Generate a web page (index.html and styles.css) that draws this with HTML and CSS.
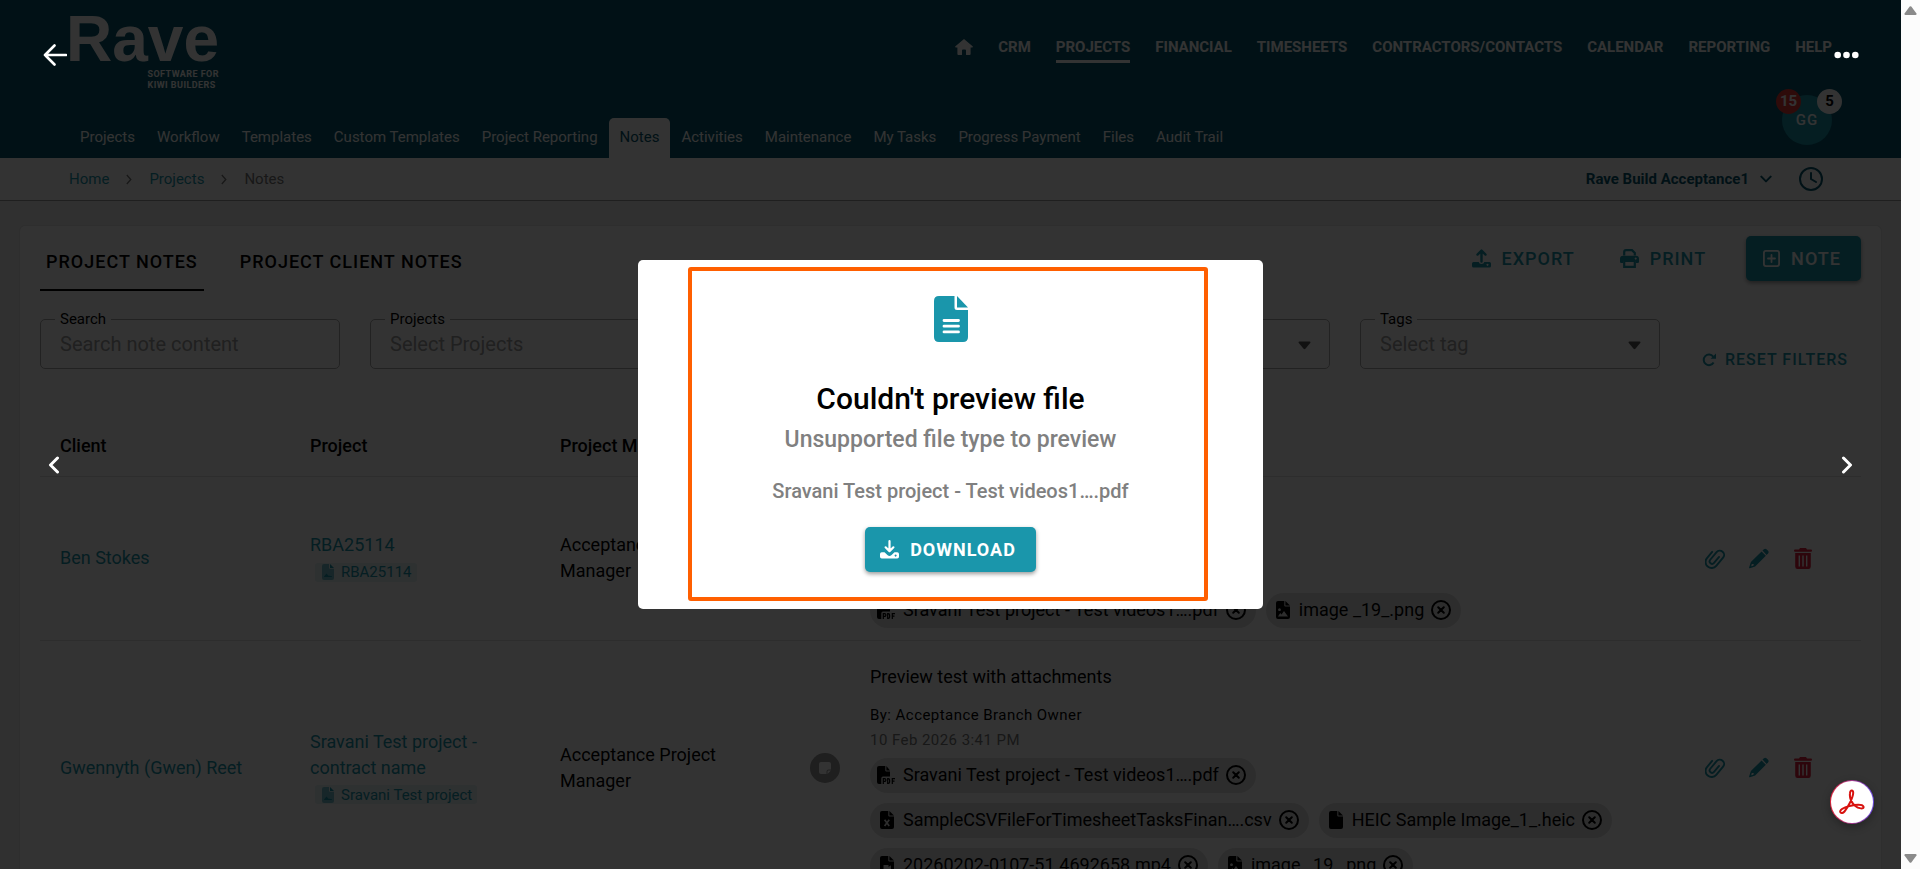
FILE: index.html
```html
<!DOCTYPE html>
<html lang="en">
<head>
<meta charset="utf-8">
<title>Rave - Project Notes</title>
<link rel="stylesheet" href="styles.css">
</head>
<body>
<svg class="sprite" aria-hidden="true">
  <defs>
    <symbol id="i-home" viewBox="0 0 18 16"><path d="M9 0 .4 7.3Q-.2 8 .6 8.400H2.400V15q0 1 1 1H6.400q.6 0 .6-.6V11.500q0-1 1-1h2q1 0 1 1v3.900q0 .6.6.6h3q1 0 1-1V8.400h1.800q.8-.4.2-1.100z"/></symbol>
    <symbol id="i-upload" viewBox="0 0 19 19"><g fill="none" stroke="currentColor" stroke-width="2.400" stroke-linecap="round" stroke-linejoin="round"><path d="M9.500 12.500V2M5.500 5.600l4-4 4 4"/></g><path d="M1.500 13h5.200q.4 2 2.800 2t2.800-2h5.200q1.500 0 1.500 1.500v2.500q0 1.500-1.500 1.500h-16Q0 18.500 0 17v-2.500Q0 13 1.500 13zm14 1.800a1 1 0 1 0 .01 0z" fill-rule="evenodd"/></symbol>
    <symbol id="i-download" viewBox="0 0 19 19"><g fill="none" stroke="currentColor" stroke-width="2.200" stroke-linecap="round" stroke-linejoin="round"><path d="M9.500 1.200v9.500M5.600 7.300l3.900 3.900 3.900-3.900"/></g><path d="M1.800 12.200h2.700l3.200 3q1.800 1.400 3.600 0l3.200-3h2.700Q19 12.200 19 14v2.800q0 1.800-1.800 1.800H1.800Q0 18.600 0 16.800V14q0-1.800 1.800-1.800zm13.800 2.300a1 1 0 1 0 .01 0z" fill-rule="evenodd"/></symbol>
    <symbol id="i-print" viewBox="0 0 19 19"><path d="M4.200 6.500V3Q4.200 1.200 6 1.200h6L14.800 4v2.500" fill="none" stroke="currentColor" stroke-width="2.200"/><path d="M3 6.800h13Q19 6.800 19 9.800v3q0 1.200-1.200 1.200H16v-2.500H3V14H1.200Q0 14 0 12.800v-3q0-3 3-3zm12.700 1.700a1 1 0 1 0 .01 0z" fill-rule="evenodd"/><path d="M4.200 12v5.800h10.600V12z" fill="none" stroke="currentColor" stroke-width="2.200"/></symbol>
    <symbol id="i-addnote" viewBox="0 0 17 17"><g fill="none" stroke="currentColor" stroke-width="1.800" stroke-linecap="round"><rect x=".9" y=".9" width="15.200" height="15.200" rx="2"/><path d="M8.500 5v7M5 8.500h7"/></g></symbol>
    <symbol id="i-reset" viewBox="0 0 14 14"><path d="M11.600 9.500A5.300 5.300 0 1 1 11.200 3.600" fill="none" stroke="currentColor" stroke-width="2"/><path d="M14 .5v5.300H8.600z"/></symbol>
    <symbol id="i-clock" viewBox="0 0 24 24"><g fill="none" stroke="currentColor" stroke-width="2" stroke-linecap="round"><circle cx="12" cy="12" r="11"/><path d="M12 6v6l5 3"/></g></symbol>
    <symbol id="i-clip" viewBox="0 0 20 21"><path transform="translate(9.500 10.500) rotate(40) scale(1.120) translate(-5 -11.200)" d="M7.200 7.500v7a2.200 2.200 0 0 1-4.400 0V5.700a3.800 3.800 0 0 1 7.600 0v9.500a5.400 5.400 0 0 1-10.800 0V8" fill="none" stroke="currentColor" stroke-width="1.700" stroke-linecap="round"/></symbol>
    <symbol id="i-pencil" viewBox="0 0 21 21"><path d="m14.200 2.200 1.400-1.400q1.400-1.200 2.800 0l1.600 1.600q1.300 1.400 0 2.800l-1.500 1.500z"/><path d="m13.200 3.200 4.500 4.500L7 18.400q-.5.5-1.200.7L.9 20.800q-1 .2-.8-.8l1.600-5q.3-.8.800-1.300zM2.900 16.300 2.300 18.600l2.300-.6.400-1.600H3z" fill-rule="evenodd"/></symbol>
    <symbol id="i-trash" viewBox="0 0 18 21"><path d="M6 0h6l1 1.400h4q1 0 1 1.200t-1 1.200H1Q0 3.800 0 2.600t1-1.200h4zM1.200 5h15.600v13.500Q16.800 21 14.500 21h-11Q1.200 21 1.200 18.500zM4.600 7.500v11H6v-11zm3.700 0v11h1.400v-11zm3.700 0v11h1.400v-11z" fill-rule="evenodd"/></symbol>
    <symbol id="i-caret" viewBox="0 0 13 9"><path d="M1.500.5h10q1.600.3.700 1.500L7.400 7.700q-.9.900-1.800 0L.8 2Q-.1.800 1.500.5z"/></symbol>
    <symbol id="i-chev" viewBox="0 0 12 18"><path d="M9.500 2 2.500 9l7 7" fill="none" stroke="currentColor" stroke-width="3" stroke-linecap="round" stroke-linejoin="round"/></symbol>
    <symbol id="i-sep" viewBox="0 0 6 11"><path d="m.8 1 4 4.500-4 4.500" fill="none" stroke="currentColor" stroke-width="1.300"/></symbol>
    <symbol id="i-x" viewBox="0 0 20 20"><g fill="none" stroke="currentColor" stroke-width="2" stroke-linecap="round"><circle cx="10" cy="10" r="9"/><path d="m7.200 7.200 5.600 5.600M12.800 7.200l-5.600 5.600"/></g></symbol>
    <symbol id="i-file" viewBox="0 0 14 18"><path d="M2 0h6.300v4.500q0 1 1 1H14V16q0 2-2 2H2q-2 0-2-2V2q0-2 2-2z"/><path d="M9.400 0 14 4.500H9.400z"/></symbol>
    <symbol id="i-image" viewBox="0 0 14 18"><path d="M2 0h6.300v4.500q0 1 1 1H14V16q0 2-2 2H2q-2 0-2-2V2q0-2 2-2zM3.500 7.300a1.400 1.400 0 1 0 .01 0zM2 15.500h10L8 10l-2.500 3.500L4.200 12z" fill-rule="evenodd"/><path d="M9.400 0 14 4.500H9.400z"/></symbol>
    <symbol id="i-excel" viewBox="0 0 14 18"><path d="M2 0h6.300v4.500q0 1 1 1H14V16q0 2-2 2H2q-2 0-2-2V2q0-2 2-2z"/><path d="M9.400 0 14 4.500H9.400z"/><path d="m4.600 8.700 4.600 6.300M9.200 8.700 4.600 15" stroke="#e1e1e1" stroke-width="1.700"/></symbol>
    <symbol id="i-video" viewBox="0 0 14 18"><path d="M2 0h6.300v4.500q0 1 1 1H14V16q0 2-2 2H2q-2 0-2-2V2q0-2 2-2zM3.500 9v6h5v-1.800l2.500 1.600V9.300L8.500 11V9z" fill-rule="evenodd"/><path d="M9.400 0 14 4.500H9.400z"/></symbol>
    <symbol id="i-pdf" viewBox="0 0 18 18"><path d="M2 0h6.300v4.500q0 1 1 1H13V10.500H6q-1.700 0-1.700 2V18H2q-2 0-2-2V2q0-2 2-2z"/><path d="M9.400 0 13 4.500H9.400z"/><path d="M6.300 18v-5.400h1.200a1.400 1.400 0 0 1 0 2.800H6.300M10.700 12.600v4.800h.6q1.300 0 1.300-1.300v-2.200q0-1.300-1.300-1.300zM15.300 18v-5.400H18M15.300 15.200h2.200" fill="none" stroke="currentColor" stroke-width="1.200"/></symbol>
    <symbol id="i-contract" viewBox="0 0 12 16"><path d="M2 0h5v4q0 .8.8.8H12V14q0 2-2 2H2q-2 0-2-2V2q0-2 2-2z" opacity=".55"/><path d="M8 0l4 4H8zM2 12.500l2.500-3 2 2.300q2-.2 3.500.4v.8H2z"/></symbol>
  </defs>
</svg>
<div class="window">
  <div class="page">
    <header class="top">
      <div class="top-row">
        <a class="logo" href="#"><span class="logo-name">Rave</span><span class="logo-tag">SOFTWARE FOR<br>KIWI BUILDERS</span></a>
        <nav class="main-nav" aria-label="Main">
          <a href="#" aria-label="Dashboard"><svg class="home"><use href="#i-home"/></svg></a>
          <a href="#">CRM</a>
          <a href="#" class="on">PROJECTS</a>
          <a href="#">FINANCIAL</a>
          <a href="#">TIMESHEETS</a>
          <a href="#">CONTRACTORS/CONTACTS</a>
          <a href="#">CALENDAR</a>
          <a href="#">REPORTING</a>
          <a href="#">HELP</a>
        </nav>
      </div>
      <div class="bottom-row">
        <nav class="sub-nav" aria-label="Projects">
          <a href="#">Projects</a><a href="#">Workflow</a><a href="#">Templates</a><a href="#">Custom Templates</a><a href="#">Project Reporting</a><a href="#" class="on">Notes</a><a href="#">Activities</a><a href="#">Maintenance</a><a href="#">My Tasks</a><a href="#">Progress Payment</a><a href="#">Files</a><a href="#">Audit Trail</a>
        </nav>
        <button class="avatar" type="button">GG<span class="badge red">15</span><span class="badge grey">5</span></button>
      </div>
    </header>
    <div class="crumbs">
      <nav class="trail" aria-label="Breadcrumb">
        <a href="#">Home</a><svg class="sep"><use href="#i-sep"/></svg><a href="#">Projects</a><svg class="sep"><use href="#i-sep"/></svg><span>Notes</span>
      </nav>
      <div class="branch">
        <button class="branch-pick" type="button">Rave Build Acceptance1<svg class="down"><use href="#i-chev"/></svg></button>
        <button class="icon-btn" type="button" aria-label="Timer"><svg class="clock"><use href="#i-clock"/></svg></button>
      </div>
    </div>
    <main class="card">
      <div class="card-head">
        <div class="tabs" role="tablist">
          <button type="button" role="tab" aria-selected="true" class="on">PROJECT NOTES</button>
          <button type="button" role="tab" aria-selected="false">PROJECT CLIENT NOTES</button>
        </div>
        <div class="tools">
          <button type="button"><svg class="i19"><use href="#i-upload"/></svg>EXPORT</button>
          <button type="button"><svg class="i19"><use href="#i-print"/></svg>PRINT</button>
          <button type="button" class="solid"><svg class="i17"><use href="#i-addnote"/></svg>NOTE</button>
        </div>
      </div>
      <form class="filters">
        <div class="field"><label for="f1">Search</label><input id="f1" type="text" placeholder="Search note content"></div>
        <div class="field"><label for="f2">Projects</label><select id="f2"><option>Select Projects</option></select><svg class="caret"><use href="#i-caret"/></svg></div>
        <div class="field"><select aria-label="Filter"><option></option></select><svg class="caret"><use href="#i-caret"/></svg></div>
        <div class="field"><select aria-label="Filter"><option></option></select><svg class="caret"><use href="#i-caret"/></svg></div>
        <div class="field"><label for="f5">Tags</label><select id="f5"><option>Select tag</option></select><svg class="caret"><use href="#i-caret"/></svg></div>
        <button class="reset" type="reset"><svg class="i14"><use href="#i-reset"/></svg>RESET FILTERS</button>
      </form>
      <table class="notes">
        <colgroup><col class="c-main"><col class="c-main"><col class="c-main"><col class="c-type"><col><col class="c-act"></colgroup>
        <thead><tr><th>Client</th><th>Project</th><th>Project Manager</th><th></th><th></th><th></th></tr></thead>
        <tbody>
          <tr class="short">
            <td><a href="#">Ben Stokes</a></td>
            <td><a href="#">RBA25114</a><br><a href="#" class="ref"><svg class="i16"><use href="#i-contract"/></svg>RBA25114</a></td>
            <td>Acceptance Project Manager</td>
            <td class="type"></td>
            <td class="note low">
              <div class="chips">
                <span class="chip"><svg class="w18"><use href="#i-pdf"/></svg>Sravani Test project - Test videos1….pdf<button type="button" aria-label="Remove"><svg><use href="#i-x"/></svg></button></span>
                <span class="chip"><svg><use href="#i-image"/></svg>image _19_.png<button type="button" aria-label="Remove"><svg><use href="#i-x"/></svg></button></span>
              </div>
            </td>
            <td><div class="acts"><button type="button" aria-label="Attach"><svg><use href="#i-clip"/></svg></button><button type="button" aria-label="Edit"><svg><use href="#i-pencil"/></svg></button><button type="button" aria-label="Delete" class="del"><svg><use href="#i-trash"/></svg></button></div></td>
          </tr>
          <tr>
            <td><a href="#">Gwennyth (Gwen) Reet</a></td>
            <td><a href="#">Sravani Test project - contract name</a><br><a href="#" class="ref"><svg class="i16"><use href="#i-contract"/></svg>Sravani Test project</a></td>
            <td>Acceptance Project Manager</td>
            <td class="type"><span class="dot"><svg viewBox="0 0 12 12"><path d="M2 0h8q2 0 2 2v5.500H9.500q-2 0-2 2V12H2q-2 0-2-2V2Q0 0 2 0zM8.500 12V9.500q0-1 1-1H12z"/></svg></span></td>
            <td class="note">
              <p class="title">Preview test with attachments</p>
              <p class="by">By: Acceptance Branch Owner</p>
              <p class="date">10 Feb 2026 3:41 PM</p>
              <div class="chips">
                <span class="chip"><svg class="w18"><use href="#i-pdf"/></svg>Sravani Test project - Test videos1….pdf<button type="button" aria-label="Remove"><svg><use href="#i-x"/></svg></button></span>
                <span class="chip"><svg><use href="#i-excel"/></svg>SampleCSVFileForTimesheetTasksFinan….csv<button type="button" aria-label="Remove"><svg><use href="#i-x"/></svg></button></span>
                <span class="chip"><svg><use href="#i-file"/></svg>HEIC Sample Image_1_.heic<button type="button" aria-label="Remove"><svg><use href="#i-x"/></svg></button></span>
                <span class="chip"><svg><use href="#i-video"/></svg>20260202-0107-51.4692658.mp4<button type="button" aria-label="Remove"><svg><use href="#i-x"/></svg></button></span>
                <span class="chip"><svg><use href="#i-image"/></svg>image _19_.png<button type="button" aria-label="Remove"><svg><use href="#i-x"/></svg></button></span>
              </div>
            </td>
            <td><div class="acts"><button type="button" aria-label="Attach"><svg><use href="#i-clip"/></svg></button><button type="button" aria-label="Edit"><svg><use href="#i-pencil"/></svg></button><button type="button" aria-label="Delete" class="del"><svg><use href="#i-trash"/></svg></button></div></td>
          </tr>
        </tbody>
      </table>
    </main>
    <div class="overlay">
      <div class="bar">
        <button type="button" aria-label="Back"><svg class="back" viewBox="0 0 24 22"><path d="M23 11H2M11.500 1.500 2 11l9.500 9.500" fill="none" stroke="currentColor" stroke-width="2.600" stroke-linecap="round" stroke-linejoin="round"/></svg></button>
        <button type="button" aria-label="More"><svg class="more" viewBox="0 0 25 8"><circle cx="3.700" cy="4" r="3.300"/><circle cx="12.500" cy="4" r="3.300"/><circle cx="21.300" cy="4" r="3.300"/></svg></button>
      </div>
      <button class="prev" type="button" aria-label="Previous"><svg><use href="#i-chev"/></svg></button>
      <section class="dialog" role="dialog" aria-labelledby="dt">
        <svg class="doc" viewBox="0 0 34 46"><path d="M5 0h15.500v11.500q0 2.500 2.500 2.500H34v27q0 5-5 5H5q-5 0-5-5V5Q0 0 5 0z"/><path d="M23 0 34 11.500H23z"/><path d="M10 24.500h14.500M10 30.200h14.500M10 35.900h14.500" stroke="#fff" stroke-width="2.800" stroke-linecap="round"/></svg>
        <h2 id="dt">Couldn't preview file</h2>
        <p class="sub">Unsupported file type to preview</p>
        <p class="name">Sravani Test project - Test videos1….pdf</p>
        <button class="download" type="button"><svg class="i19"><use href="#i-download"/></svg>DOWNLOAD</button>
        <div class="frame"></div>
      </section>
      <button class="next" type="button" aria-label="Next"><svg><use href="#i-chev"/></svg></button>
    </div>
    <button class="acrobat" type="button" aria-label="Open in Acrobat"><svg viewBox="0 0 26 26"><path d="M1.500 23.500c-1.500-2 2.500-5 9-6.500 6-1.300 13-1.800 14 .7.800 2.800-5 2-8.500-1-4-3.500-5.500-8.500-5-12.500.3-3.500 3.300-3.700 3.200-.2C14 9 8.500 19 5.500 22.500c-1.500 1.700-3.200 2-4 1z" fill="none" stroke="#d8120f" stroke-width="2" stroke-linejoin="round"/></svg></button>
  </div>
  <div class="scroll" aria-hidden="true"><svg viewBox="0 0 13 9"><path d="M5.700.6q.8-.8 1.600 0l5.200 6.800Q12.800 9 11.500 9h-10Q.2 9 .5 7.400z"/></svg><svg class="flip" viewBox="0 0 13 9"><path d="M5.700.6q.8-.8 1.600 0l5.200 6.800Q12.800 9 11.500 9h-10Q.2 9 .5 7.400z"/></svg></div>
</div>
</body>
</html>
```

FILE: styles.css
```css
*{box-sizing:border-box}
body{margin:0;font-family:Roboto,sans-serif;font-size:18px;line-height:26px;color:#000;background:#f0f0f0}
button,input,select{font:inherit;color:inherit;background:none;border:0;padding:0;margin:0}
button{display:inline-flex;align-items:center;justify-content:center;cursor:pointer}
a{color:#1a96ab;text-decoration:none}
svg{fill:currentColor;flex:none}
p,h2{margin:0}
.sprite{position:absolute;width:0;height:0}
.window{display:grid;grid-template-columns:minmax(0,1fr) 19px;height:100vh}
.page{position:relative;overflow:hidden;background:#f0f0f0}

.top{background:#05586e;color:#fff;height:158px;padding:0 69px;display:flex;flex-direction:column;justify-content:space-between}
.top a{color:inherit}
.top-row{display:flex;justify-content:space-between;align-items:flex-start}
.logo{display:flex;flex-direction:column;padding-top:10px;margin-left:-3px}
.logo-name{font:bold 64px/59px "Liberation Sans",Arial,sans-serif}
.logo-tag{font-size:9px;font-weight:700;line-height:11px;letter-spacing:.05em;align-self:flex-end}
.main-nav{display:flex;gap:25px;padding-top:33px;font-size:15px;font-weight:700}
.main-nav a{display:flex;align-items:center;height:30px;border-bottom:3px solid transparent}
.main-nav .on{border-color:#fff}
.home{width:18px;height:16px}
.bottom-row{display:flex;justify-content:space-between;align-items:flex-end}
.sub-nav{display:flex;font-size:15px}
.sub-nav a{height:40px;line-height:39px;padding:0 11px;border-radius:5px 5px 0 0}
.sub-nav .on{background:#fff;color:#05586e}
.avatar{position:relative;width:50px;height:50px;border-radius:50%;background:#1a96ab;font-size:15px;font-weight:500;letter-spacing:1px;margin-bottom:13px;color:#fff}
.badge{position:absolute;top:-6px;width:25px;height:25px;border-radius:50%;line-height:25px;letter-spacing:0;font-weight:700}
.red{left:-6px;background:#e53935}
.grey{right:-10px;background:#fff;color:#000}

.crumbs{display:flex;justify-content:space-between;align-items:center;height:43px;padding:0 78px 0 69px;background:#fff;border-bottom:1px solid #999;font-size:15px}
.trail{display:flex;align-items:center;gap:17px;color:#777}
.sep{width:6px;height:11px}
.branch{display:flex;align-items:center;gap:29px;color:#05586e}
.branch-pick{font-weight:700;gap:13px}
.down{width:8px;height:12px;transform:rotate(-90deg)}
.clock{width:24px;height:24px}

.card{margin:25px 20px 0;padding:10px 20px 40px;background:#fff;border-radius:5px;box-shadow:0 0 2px rgba(0,0,0,.2)}
.card-head{display:flex;justify-content:space-between;align-items:flex-start;height:83px}
.tabs{display:flex;gap:30px}
.tabs button{height:55px;padding:0 6px 2px;font-size:18px;font-weight:500;letter-spacing:1px;border-bottom:2px solid transparent}
.tabs .on{border-color:#000}
.tools{display:flex;gap:11px;color:#1a96ab}
.tools button{height:45px;padding:0 17px;gap:11px;font-size:18px;font-weight:500;letter-spacing:1px}
.tools .solid{background:#1a96ab;color:#fff;border-radius:5px;box-shadow:0 2px 4px rgba(0,0,0,.4);padding:0 20px 0 17px;margin-left:12px}
.i19{width:19px;height:19px}.i17{width:17px;height:17px}.i16{width:12px;height:16px}.i14{width:14px;height:14px}

.filters{display:flex;gap:30px;align-items:flex-start}
.field{position:relative;flex:0 1 300px;height:50px;border:1px solid #aaa;border-radius:5px}
.field label{position:absolute;left:14px;top:-14px;padding:0 5px;background:#fff;font-size:15px}
.field input,.field select{width:100%;height:100%;padding:0 19px;font-size:20px;color:#a0a0a0;appearance:none;outline:0}
.field input::placeholder{color:#a0a0a0;opacity:1}
.caret{position:absolute;right:18px;top:21px;width:13px;height:9px;color:#555;pointer-events:none}
.reset{color:#1a96ab;font-size:16px;font-weight:500;letter-spacing:1px;gap:9px;padding:28px 0 0 12px;white-space:nowrap}

.notes{width:100%;table-layout:fixed;border-collapse:collapse;margin-top:41px}
.c-main{width:250px}.c-type{width:70px}.c-act{width:176px}
th{height:62px;text-align:left;font-weight:500;padding:2px 20px 0;border-bottom:1px solid #e2e2e2}
td{padding:12px 20px;border-bottom:1px solid #e2e2e2}
th:nth-child(4),td.type{padding:0}
.short td{height:164px}
td.note{padding-left:10px;padding-right:0}
td.low{vertical-align:bottom}
.ref{display:inline-flex;align-items:center;gap:7px;height:19px;vertical-align:middle;margin-left:5px;padding:0 5px 0 7px;background:#e3f2f4;border-radius:3px;font-size:15px}
.type{text-align:center}
.dot{display:inline-flex;width:30px;height:30px;border-radius:50%;background:#999;align-items:center;justify-content:center;color:#fff;vertical-align:middle}
.dot svg{width:12px;height:12px}
.title{margin:11px 0 13px}
.by,.date{font-size:15px;letter-spacing:.03em;line-height:25px}
.date{color:#777;margin-bottom:5px}
.chips{display:flex;flex-wrap:wrap;gap:10px}
.chip{display:inline-flex;align-items:center;height:35px;border-radius:18px;background:#e1e1e1;padding:0 10px;white-space:nowrap}
.chip svg{width:14px;height:18px;margin-right:9px}
.chip .w18{width:18px;margin:0 8px 0 -3px}
.chip button{margin-left:7px}
.chip button svg{width:20px;height:20px;margin:0}
.acts{display:flex;gap:24px;color:#1a96ab}
.acts svg{width:20px;height:21px}
.acts .del{color:#e0213c}

.overlay{position:absolute;inset:0;background:rgba(0,0,0,.8);display:grid;grid-template-columns:60px 1fr 60px;place-items:center;color:#fff}
.bar{position:absolute;top:44px;left:43px;right:42px;display:flex;justify-content:space-between}
.back{width:24px;height:22px}
.more{width:25px;height:8px}
.prev svg,.next svg{width:12px;height:18px}
.prev{justify-self:end;padding-top:60px}
.next{justify-self:start;padding-top:60px}
.next svg{transform:scaleX(-1)}
.dialog{position:relative;width:625px;max-width:100%;background:#fff;border-radius:5px;padding:36px 20px 37px;display:flex;flex-direction:column;align-items:center;color:#808080;font-weight:500;text-align:center}
.doc{width:34px;height:46px;color:#1a96ab}
.dialog h2{color:#000;font-size:30px;font-weight:500;line-height:36px;margin-top:39px}
.sub{font-size:23px;line-height:30px;margin-top:8px}
.name{font-size:20px;line-height:26px;margin-top:23px}
.download{height:45px;padding:0 20px 0 15px;margin-top:23px;gap:11px;background:#1a96ab;color:#fff;font-size:18px;font-weight:700;letter-spacing:1px;border-radius:5px;box-shadow:0 2px 4px rgba(0,0,0,.4)}
.frame{position:absolute;inset:7px 55px 8px 50px;border:4px solid #ff5f00;border-radius:3px;pointer-events:none}
.acrobat{position:absolute;right:27px;bottom:45px;width:44px;height:44px;border-radius:50%;border:1px solid transparent;background:linear-gradient(#fff,#fff) padding-box,linear-gradient(90deg,#e0243b,#6a4be0) border-box;box-shadow:0 3px 8px rgba(0,0,0,.3)}
.acrobat svg{width:26px;height:26px}
.scroll{background:#fcfcfc;color:#8a8a8a;display:flex;flex-direction:column;justify-content:space-between;align-items:center;padding:6px 0}
.scroll svg{width:13px;height:9px}
.flip{transform:scaleY(-1)}
```
